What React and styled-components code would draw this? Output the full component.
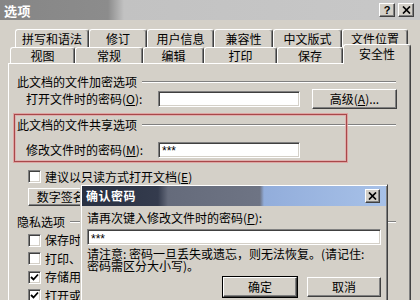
import React from "react";
import styled, { createGlobalStyle, css } from "styled-components";

const FACE = "#d4d0c8";

const Global = createGlobalStyle`
  html, body { margin: 0; padding: 0; background: ${FACE}; }
  body {
    font-family: "Noto Sans CJK SC", "Liberation Sans", sans-serif;
    font-size: 12px;
    color: #000;
  }
  * { box-sizing: border-box; }
`;

const Window = styled.div`
  position: relative;
  width: 420px;
  height: 300px;
  overflow: hidden;
  background: ${FACE};
`;

const TitleBar = styled.div`
  height: 20px;
  display: flex;
  align-items: center;
  justify-content: space-between;
  padding: 0 6px 0 4px;
  background: ${(p) => p.$bg};
`;

const TitleText = styled.span`
  color: #fff;
  font-weight: 700;
  font-size: ${(p) => p.$size || 13}px;
  line-height: 1;
  letter-spacing: 0.5px;
`;

const CaptionGroup = styled.div`
  display: flex;
  gap: ${(p) => p.$gap || 3}px;
`;

const CaptionButton = styled.div`
  width: ${(p) => p.$w || 16}px;
  height: 14px;
  background: ${FACE};
  border: 1px solid;
  border-color: #fff #404040 #404040 #fff;
  box-shadow: inset -1px -1px #808080;
  display: flex;
  align-items: center;
  justify-content: center;
  font-family: "Liberation Sans", sans-serif;
  font-weight: 700;
  font-size: 11px;
  line-height: 1;
`;

const Body = styled.div`
  padding-top: 9px;
`;

const TabRow = styled.div`
  display: flex;
  align-items: flex-end;
  height: ${(p) => p.$h}px;
  padding-left: ${(p) => p.$indent}px;
`;

const Tab = styled.div`
  width: ${(p) => p.$w}px;
  height: 100%;
  border-top: 1px solid #fff;
  border-left: 1px solid #fff;
  border-right: 1px solid #404040;
  box-shadow: inset -1px 0 #808080;
  border-radius: 3px 3px 0 0;
  background: ${FACE};
  display: flex;
  align-items: center;
  justify-content: center;
  line-height: 12px;
  white-space: nowrap;
  ${(p) =>
    p.$active &&
    css`
      position: relative;
      z-index: 2;
      height: 20px;
      margin-bottom: -1px;
      align-items: flex-end;
      padding-bottom: 4px;
    `}
`;

const Panel = styled.div`
  margin-left: 8px;
  width: 403px;
  height: 240px;
  border-top: 1px solid #fff;
  border-left: 1px solid #fff;
  border-right: 1px solid #404040;
  box-shadow: inset -1px 0 #808080;
  display: flex;
  flex-direction: column;
`;

const GroupHeader = styled.div`
  display: flex;
  align-items: center;
  height: 14px;
  margin-top: ${(p) => p.$mt}px;
  padding-left: 8px;
  padding-right: 14px;
  line-height: 12px;
  white-space: nowrap;
`;

const EtchLine = styled.div`
  flex: 1;
  height: 2px;
  margin-left: 5px;
  border-top: 1px solid #808080;
  border-bottom: 1px solid #fff;
`;

const FieldRow = styled.div`
  display: flex;
  align-items: center;
  height: 20px;
  margin-top: ${(p) => p.$mt}px;
  padding-left: 17px;
`;

const FieldLabel = styled.span`
  width: 132px;
  line-height: 12px;
  white-space: nowrap;
`;

const TextBox = styled.div`
  width: ${(p) => p.$w}px;
  height: 16px;
  margin-top: ${(p) => p.$mt || 0}px;
  background: #fff;
  border: 1px solid;
  border-color: #808080 #fff #fff #808080;
  box-shadow: inset 1px 1px #404040, inset -1px -1px ${FACE};
  padding: 3px 3px 0;
  display: flex;
  align-items: center;
  font-family: "Liberation Sans", sans-serif;
  font-size: 12px;
  line-height: 1;
`;

const PushButton = styled.div`
  width: ${(p) => p.$w}px;
  height: ${(p) => p.$h || 20}px;
  margin-left: ${(p) => p.$ml || 0}px;
  margin-top: ${(p) => p.$mt || 0}px;
  background: ${FACE};
  border: 1px solid;
  border-color: #fff #404040 #404040 #fff;
  box-shadow: inset -1px -1px #808080;
  display: flex;
  align-items: center;
  justify-content: center;
  line-height: 12px;
  white-space: nowrap;
  ${(p) =>
    p.$default &&
    css`
      outline: 1px solid #000;
    `}
`;

const CheckRow = styled.div`
  display: flex;
  align-items: center;
  height: 14px;
  margin-top: ${(p) => p.$mt || 0}px;
  padding-left: 19px;
  line-height: 12px;
  white-space: nowrap;
`;

const CheckList = styled.div`
  display: flex;
  flex-direction: column;
  gap: 4.5px;
  margin-top: 5px;
`;

const CheckBox = styled.div`
  width: 13px;
  height: 13px;
  margin-right: 4px;
  background: #fff;
  border: 1px solid;
  border-color: #808080 #fff #fff #808080;
  box-shadow: inset 1px 1px #404040, inset -1px -1px ${FACE};
  display: flex;
  align-items: center;
  justify-content: center;
`;

const Annotation = styled.div`
  position: absolute;
  left: 14px;
  top: 114px;
  width: 333px;
  height: 48px;
  border: 1px solid #a8484a;
  box-shadow: 0 0 0 1px rgba(225, 150, 150, 0.75),
    inset 0 0 0 1px rgba(225, 165, 165, 0.75);
  pointer-events: none;
`;

const Modal = styled.div`
  position: absolute;
  left: 80px;
  top: 184px;
  width: 308px;
  height: 130px;
  background: ${FACE};
  border: 1px solid;
  border-color: ${FACE} #404040 #404040 ${FACE};
  box-shadow: inset 1px 1px #fff, inset -1px -1px #808080;
  padding: 1px;
  display: flex;
  flex-direction: column;
`;

const ModalBody = styled.div`
  padding: 0 5px 0 5px;
  display: flex;
  flex-direction: column;
`;

const ModalText = styled.div`
  margin-top: ${(p) => p.$mt}px;
  line-height: 12px;
  white-space: nowrap;
`;

const ButtonRow = styled.div`
  display: flex;
  justify-content: flex-end;
  gap: 10px;
  margin-top: 5px;
`;

const Check = () => (
  <svg width="9" height="9" viewBox="0 0 9 9">
    <path d="M1 4 L3.5 6.5 L8 1.5" fill="none" stroke="#000" strokeWidth="1.8" />
  </svg>
);

const CloseGlyph = () => (
  <svg width="9" height="8" viewBox="0 0 9 8">
    <path d="M1 0.5 L8 7.5 M8 0.5 L1 7.5" stroke="#000" strokeWidth="1.7" />
  </svg>
);

const row1 = [
  ["拼写和语法", 74],
  ["修订", 58],
  ["用户信息", 67],
  ["兼容性", 59],
  ["中文版式", 69],
  ["文件位置", 66],
];
const row2 = [
  ["视图", 65],
  ["常规", 68],
  ["编辑", 61],
  ["打印", 73],
  ["保存", 66],
  ["安全性", 68, true],
];

const privacy = [
  ["保存时从文件属性中删除个人信息", "R", false],
  ["打印、保存或发送包含修订或批注的文件之前给出警告", "W", false],
  ["存储用于增强合并精确性的随机编号", "S", true],
  ["打开或保存时标记可见", "V", true],
];

export default function App() {
  return (
    <>
      <Global />
      <Window>
        <TitleBar $bg="linear-gradient(90deg, #868686 0px, #8c8c8c 108px, #c2c2c2 124px, #c8c8c8 100%)">
          <TitleText>选项</TitleText>
          <CaptionGroup>
            <CaptionButton>?</CaptionButton>
            <CaptionButton>
              <CloseGlyph />
            </CaptionButton>
          </CaptionGroup>
        </TitleBar>
        <Body>
          <TabRow $h={18} $indent={15}>
            {row1.map(([t, w]) => (
              <Tab key={t} $w={w}>
                {t}
              </Tab>
            ))}
          </TabRow>
          <TabRow $h={16} $indent={10}>
            {row2.map(([t, w, a]) => (
              <Tab key={t} $w={w} $active={a}>
                {t}
              </Tab>
            ))}
          </TabRow>
          <Panel>
            <GroupHeader $mt={11}>
              此文档的文件加密选项
              <EtchLine />
            </GroupHeader>
            <FieldRow $mt={0}>
              <FieldLabel>
                打开文件时的密码(<u>O</u>):
              </FieldLabel>
              <TextBox $w={142} />
              <PushButton $w={85} $ml={12}>
                高级(<u>A</u>)...
              </PushButton>
            </FieldRow>
            <GroupHeader $mt={9}>
              此文档的文件共享选项
              <EtchLine />
            </GroupHeader>
            <FieldRow $mt={8}>
              <FieldLabel>
                修改文件时的密码(<u>M</u>):
              </FieldLabel>
              <TextBox $w={142}>***</TextBox>
            </FieldRow>
            <CheckRow $mt={10}>
              <CheckBox />
              建议以只读方式打开文档(<u>E</u>)
            </CheckRow>
            <PushButton $w={92} $h={18} $ml={19} $mt={4}>
              数字签名(<u>D</u>)...
            </PushButton>
            <GroupHeader $mt={9}>
              隐私选项
              <EtchLine />
            </GroupHeader>
            <CheckList>
              {privacy.map(([t, k, c]) => (
                <CheckRow key={t}>
                  <CheckBox>{c && <Check />}</CheckBox>
                  {t}(<u>{k}</u>)
                </CheckRow>
              ))}
            </CheckList>
          </Panel>
        </Body>
        <Annotation />
        <Modal>
          <TitleBar $bg="linear-gradient(90deg, #283041 0px, #343b4d 76px, #656b7b 86px, #6e7484 178px, #92addb 182px, #a7c1e8 100%)">
            <TitleText $size={12}>确认密码</TitleText>
            <CaptionGroup>
              <CaptionButton $w={15}>
                <CloseGlyph />
              </CaptionButton>
            </CaptionGroup>
          </TitleBar>
          <ModalBody>
            <ModalText $mt={6}>
              请再次键入修改文件时的密码(<u>P</u>):
            </ModalText>
            <TextBox $w={294} $mt={5}>
              ***
            </TextBox>
            <ModalText $mt={3}>
              请注意: 密码一旦丢失或遗忘，则无法恢复。(请记住:
              <br />
              密码需区分大小写)。
            </ModalText>
            <ButtonRow>
              <PushButton $w={74} $default>
                确定
              </PushButton>
              <PushButton $w={74}>取消</PushButton>
            </ButtonRow>
          </ModalBody>
        </Modal>
      </Window>
    </>
  );
}
